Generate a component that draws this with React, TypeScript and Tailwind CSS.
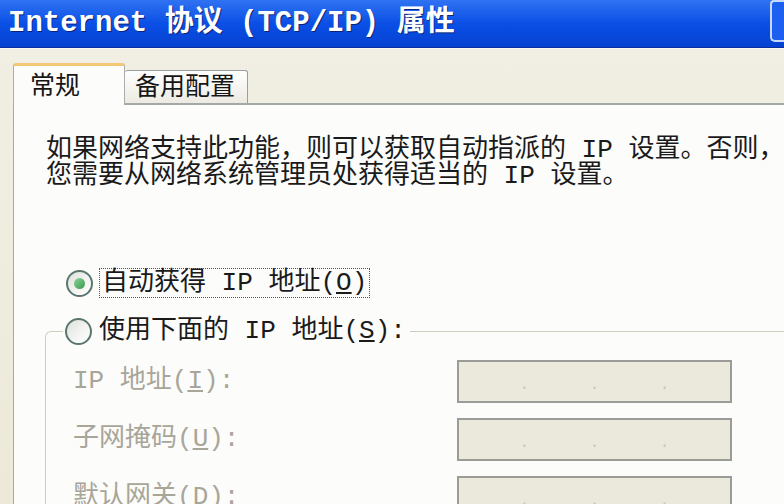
import React from "react";

const mono = "font-['Liberation_Mono','Noto_Sans_CJK_SC',monospace]";

function Radio({ checked }: { checked?: boolean }) {
  return (
    <span className="flex h-[27px] w-[27px] shrink-0 items-center justify-center rounded-full border-2 border-[#5b7670] bg-gradient-to-br from-[#dcdfd9] via-[#f2f3f0] to-white">
      {checked && (
        <span className="h-[11px] w-[11px] rounded-full bg-gradient-to-br from-[#8fd39a] to-[#2f9a4c]" />
      )}
    </span>
  );
}

function IpBox() {
  return (
    <div className="flex h-[43px] w-[275px] items-center border-2 border-[#9b9b98] bg-[#ebe9dc]">
      <span className="flex-1" />
      <span className="pt-[6px] text-[16px] leading-none text-[#c9c6b6]">.</span>
      <span className="flex-1" />
      <span className="pt-[6px] text-[16px] leading-none text-[#c9c6b6]">.</span>
      <span className="flex-1" />
      <span className="pt-[6px] text-[16px] leading-none text-[#c9c6b6]">.</span>
      <span className="flex-1" />
    </div>
  );
}

function Field({ label, hotkey }: { label: string; hotkey: string }) {
  return (
    <div className="flex items-center">
      <span className="w-[384px] whitespace-nowrap text-[#a8a699]">
        {label}(<span className="underline">{hotkey}</span>):
      </span>
      <IpBox />
    </div>
  );
}

export default function App() {
  return (
    <div className={`flex h-[504px] w-[784px] flex-col overflow-hidden bg-[#ece9d8] ${mono}`}>
      <div className="flex h-[48px] shrink-0 items-center border-b border-[#0a2f9e] bg-gradient-to-b from-[#2f72f2] via-[#0a4fe6] to-[#0641d0] pl-[8px]">
        <span className="whitespace-nowrap text-[29px] font-bold leading-none text-white [text-shadow:1px_1px_0_#0b2478]">
          Internet 协议 (TCP/IP) 属性
        </span>
        <span className="ml-auto h-[42px] w-[14px] self-start rounded-tl-[4px] rounded-bl-[5px] border-2 border-r-0 border-[#c8d8f6] bg-[#1d5ff0]" />
      </div>

      <div className="flex flex-1 flex-col border-t border-[#f8f8f2] bg-gradient-to-b from-[#f1efe3] to-[#ece9d8] pl-[13px] pt-[14px]">
        <div className="flex h-[40px] items-end">
          <div className="relative z-10 mb-[-2px] flex h-[42px] w-[112px] items-center rounded-t-[3px] border border-b-0 border-t-[3px] border-[#a9aea9] border-t-[#f3c775] bg-[#fcfcfa] pl-[16px] pt-[4px] text-[25px] text-[#161616]">
            常规
          </div>
          <div className="flex h-[33px] w-[123px] items-center rounded-t-[3px] border border-b-0 border-l-0 border-[#98a09c] bg-gradient-to-b from-white to-[#eceae2] pl-[10px] pt-[4px] text-[25px] text-[#161616]">
            备用配置
          </div>
        </div>

        <div className="flex flex-1 flex-col border-l border-t-2 border-[#a3aaa6] bg-[#fcfcfb] pl-[32px] pt-[32px]">
          <p className="whitespace-nowrap text-[26px] leading-[26px] text-[#1a1a1a]">
            如果网络支持此功能，则可以获取自动指派的 IP 设置。否则，
            <br />
            您需要从网络系统管理员处获得适当的 IP 设置。
          </p>

          <div className="ml-[20px] mt-[79px] flex h-[30px] items-center gap-[6px] text-[26px] text-[#1a1a1a]">
            <Radio checked />
            <span className="whitespace-nowrap border border-dotted border-[#555] px-[2px] leading-[28px]">
              自动获得 IP 地址(<span className="underline">O</span>)
            </span>
          </div>

          <fieldset className="ml-[-1px] mt-[18px] w-[820px] rounded-tl-[6px] border-l border-t border-[#cfcdc0] pl-[27px] text-[26px]">
            <legend className="ml-[-10px] pl-[2px] pr-[4px]">
              <span className="flex h-[30px] items-center gap-[7px] text-[#1a1a1a]">
                <Radio />
                <span className="whitespace-nowrap">
                  使用下面的 IP 地址(<span className="underline">S</span>):
                </span>
              </span>
            </legend>
            <div className="flex flex-col gap-[15px] pt-[14px]">
              <Field label="IP 地址" hotkey="I" />
              <Field label="子网掩码" hotkey="U" />
              <Field label="默认网关" hotkey="D" />
            </div>
          </fieldset>
        </div>
      </div>
    </div>
  );
}
